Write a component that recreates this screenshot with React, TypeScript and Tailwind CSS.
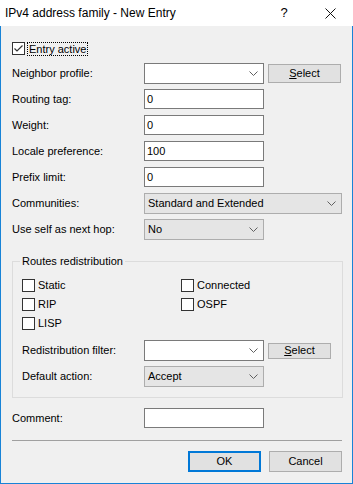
import React from 'react';

const font = { fontFamily: '"Liberation Sans", Arial, sans-serif' };

function Chevron() {
  return (
    <svg width="9" height="5" viewBox="0 0 9 5" className="shrink-0">
      <polyline points="0.5,0.5 4.5,4.5 8.5,0.5" fill="none" stroke="#606060" strokeWidth="1" />
    </svg>
  );
}

function Check({ checked = false }: { checked?: boolean }) {
  return (
    <span className="w-[13px] h-[13px] border border-[#333333] bg-white shrink-0 flex items-center justify-center">
      {checked && (
        <svg width="11" height="11" viewBox="0 0 11 11">
          <polyline points="1.5,5.5 4,8 9.5,2.5" fill="none" stroke="#333333" strokeWidth="1.2" />
        </svg>
      )}
    </span>
  );
}

function TextBox({ value = '', w = 'w-[120px]' }: { value?: string; w?: string }) {
  return (
    <div className={`${w} h-[20px] border border-[#7A7A7A] bg-white flex items-center pl-[2px] text-[11px] text-black`}>
      {value}
    </div>
  );
}

function Combo({ w = 'w-[120px]' }: { w?: string }) {
  return (
    <div className={`${w} h-[21px] border border-[#7A7A7A] bg-white flex items-center justify-end pr-[5px]`}>
      <Chevron />
    </div>
  );
}

function DropDown({ value, w = 'w-[120px]' }: { value: string; w?: string }) {
  return (
    <div className={`${w} h-[21px] border border-[#ADADAD] bg-[#E5E5E5] flex items-center justify-between pl-[3px] pr-[5px] text-[11px] text-black`}>
      <span>{value}</span>
      <Chevron />
    </div>
  );
}

function SelectButton({ w, h }: { w: string; h: string }) {
  return (
    <div className={`${w} ${h} border border-[#ADADAD] bg-[#E1E1E1] flex items-center justify-center text-[11px] text-black`}>
      <span><span className="underline underline-offset-1">S</span>elect</span>
    </div>
  );
}

function Row({ label, children, labelW = 'w-[132px]', h = 'h-[20px]', mt }: { label: string; children: React.ReactNode; labelW?: string; h?: string; mt: string }) {
  return (
    <div className={`flex items-center ${h} ${mt}`}>
      <span className={`${labelW} shrink-0 text-[11px] text-black`}>{label}</span>
      {children}
    </div>
  );
}

export default function App() {
  return (
    <div className="w-[353px] h-[484px] flex flex-col bg-white" style={font}>
      {/* title bar */}
      <div className="h-[26px] shrink-0 flex items-center bg-white pl-[5px]">
        <span className="text-[12px] text-black flex-1">IPv4 address family - New Entry</span>
        <span className="w-[46px] text-center text-[13px] text-black">?</span>
        <span className="w-[46px] flex justify-center">
          <svg width="11" height="11" viewBox="0 0 11 11">
            <path d="M0.5 0.5 L10.5 10.5 M10.5 0.5 L0.5 10.5" stroke="#111" strokeWidth="1" />
          </svg>
        </span>
      </div>

      {/* body */}
      <div className="flex-1 flex flex-col bg-[#F0F0F0] border-l border-r border-b border-[#1883D7] pl-[11px] pr-[10px]">
        <div className="mt-[16px] h-[13px] flex items-center">
          <Check checked />
          <span className="ml-[2px] border border-dotted border-black px-[1px] leading-[12px] text-[11px] text-black">Entry active</span>
        </div>

        <Row label="Neighbor profile:" h="h-[21px]" mt="mt-[8px]">
          <Combo />
          <div className="ml-[4px]">
            <SelectButton w="w-[73px]" h="h-[19px]" />
          </div>
        </Row>
        <Row label="Routing tag:" mt="mt-[5px]"><TextBox value="0" /></Row>
        <Row label="Weight:" mt="mt-[6px]"><TextBox value="0" /></Row>
        <Row label="Locale preference:" mt="mt-[6px]"><TextBox value="100" /></Row>
        <Row label="Prefix limit:" mt="mt-[6px]"><TextBox value="0" /></Row>
        <Row label="Communities:" h="h-[21px]" mt="mt-[6px]"><DropDown value="Standard and Extended" w="w-[199px]" /></Row>
        <Row label="Use self as next hop:" h="h-[21px]" mt="mt-[5px]"><DropDown value="No" /></Row>

        {/* group box */}
        <div className="relative mt-[21px] w-[331px] border border-[#DCDCDC] pl-[9px] pt-[17px] pb-[10px]">
          <span className="absolute -top-[8px] left-[7px] px-[2px] bg-[#F0F0F0] leading-[14px] text-[11px] text-black">Routes redistribution</span>
          <div className="grid grid-cols-[159px_1fr] gap-y-[6px]">
            {[['Static', 'Connected'], ['RIP', 'OSPF'], ['LISP', '']].map(([a, b]) => (
              <React.Fragment key={a}>
                <div className="h-[13px] flex items-center gap-[3px] text-[11px] text-black"><Check />{a}</div>
                <div className="h-[13px] flex items-center gap-[3px] text-[11px] text-black">{b && <><Check />{b}</>}</div>
              </React.Fragment>
            ))}
          </div>
          <Row label="Redistribution filter:" labelW="w-[122px]" h="h-[21px]" mt="mt-[10px]">
            <Combo />
            <div className="ml-[4px]">
              <SelectButton w="w-[63px]" h="h-[16px]" />
            </div>
          </Row>
          <Row label="Default action:" labelW="w-[122px]" h="h-[21px]" mt="mt-[5px]">
            <DropDown value="Accept" />
          </Row>
        </div>

        <Row label="Comment:" mt="mt-[10px]"><TextBox /></Row>

        <div className="mt-[12px] w-[330px] h-px bg-[#A0A0A0]" />

        <div className="mt-[10px] flex justify-end gap-[8px]">
          <div className="w-[73px] h-[21px] border-2 border-[#0078D7] bg-[#E1E1E1] flex items-center justify-center text-[11px] text-black">OK</div>
          <div className="w-[73px] h-[21px] border border-[#ADADAD] bg-[#E1E1E1] flex items-center justify-center text-[11px] text-black">Cancel</div>
        </div>
      </div>
    </div>
  );
}
